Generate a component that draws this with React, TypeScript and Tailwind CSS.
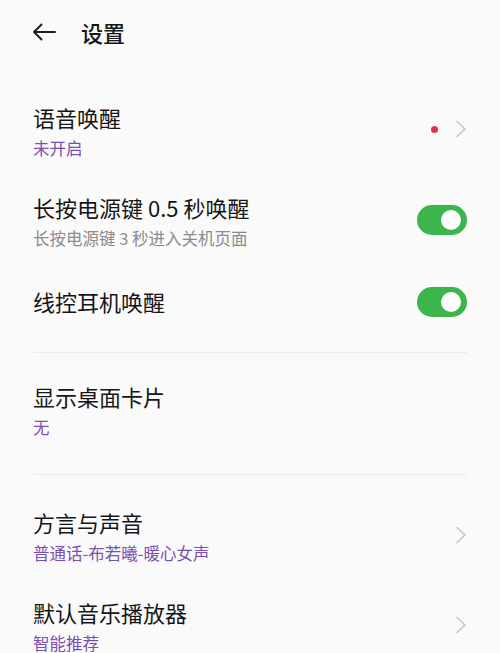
import React from "react";

const font = { fontFamily: '"Noto Sans CJK SC", "Noto Sans", sans-serif' };

function Chevron() {
  return (
    <svg width="12" height="18" viewBox="0 0 12 18" fill="none">
      <path d="M2 1.5 L10 9 L2 16.5" stroke="#c6c6c6" strokeWidth="1.6" strokeLinecap="round" strokeLinejoin="round" />
    </svg>
  );
}

function Toggle() {
  return (
    <div className="w-[50px] h-[30px] rounded-full bg-[#3bb54c] flex items-center justify-end pr-[6px]">
      <div className="w-[20px] h-[20px] rounded-full bg-white" />
    </div>
  );
}

function Row({
  title,
  sub,
  subColor = "purple",
  right,
}: {
  title: string;
  sub?: string;
  subColor?: "purple" | "gray";
  right?: React.ReactNode;
}) {
  return (
    <div className="flex items-center justify-between px-[33px] py-[14px]">
      <div className="flex flex-col">
        <div className="text-[22px] leading-[30px] text-[#161616]">{title}</div>
        {sub && (
          <div
            className={
              "text-[16.5px] leading-[32px] " +
              (subColor === "purple" ? "text-[#7a4fb0]" : "text-[#8c8c8c]")
            }
          >
            {sub}
          </div>
        )}
      </div>
      {right && <div className="flex items-center mb-[6px]">{right}</div>}
    </div>
  );
}

export default function App() {
  return (
    <div className="w-[500px] h-[653px] bg-[#fafafa] overflow-hidden" style={font}>
      <div className="h-[64px] flex items-center px-[32px]">
        <svg width="24" height="18" viewBox="0 0 24 18" fill="none">
          <path d="M23 9 H2 M9.5 1.5 L2 9 L9.5 16.5" stroke="#1e1e1e" strokeWidth="2" strokeLinecap="round" strokeLinejoin="round" />
        </svg>
        <div className="ml-[25px] text-[22px] leading-[30px] text-[#161616] font-medium">设置</div>
      </div>
      <div className="mt-[24px] flex flex-col">
        <Row
          title="语音唤醒"
          sub="未开启"
          right={
            <div className="flex items-center gap-[17px] mb-[2px]">
              <div className="w-[7px] h-[7px] rounded-full bg-[#e03448]" />
              <Chevron />
            </div>
          }
        />
        <Row title="长按电源键 0.5 秒唤醒" sub="长按电源键 3 秒进入关机页面" subColor="gray" right={<Toggle />} />
        <div className="flex items-center justify-between px-[33px] h-[68px]">
          <div className="text-[22px] leading-[30px] text-[#161616] mb-[2px]">线控耳机唤醒</div>
          <Toggle />
        </div>
        <div className="mx-[33px] mt-[16px] h-px bg-[#ebebeb]" />
        <div className="mt-[14px]">
          <Row title="显示桌面卡片" sub="无" />
        </div>
        <div className="mx-[33px] mt-[17px] h-px bg-[#ebebeb]" />
        <div className="mt-[18px]">
          <Row title="方言与声音" sub="普通话-布若曦-暖心女声" right={<Chevron />} />
          <Row title="默认音乐播放器" sub="智能推荐" right={<Chevron />} />
        </div>
      </div>
    </div>
  );
}
